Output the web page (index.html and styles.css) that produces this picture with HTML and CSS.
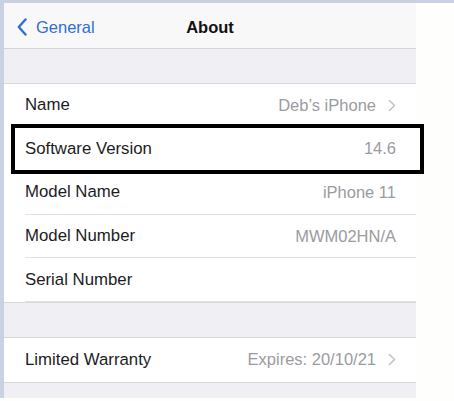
FILE: index.html
```html
<!DOCTYPE html>
<html>
<head>
<meta charset="utf-8">
<link rel="stylesheet" href="styles.css">
</head>
<body>
<div class="frame">
  <div class="screen">
    <div class="navbar">
      <div class="back">
        <svg class="back-icon" width="10" height="18" viewBox="0 0 10 18"><path d="M8.5 1.5 L1.8 9 L8.5 16.5" fill="none" stroke="#2f6fd4" stroke-width="2.4" stroke-linecap="round" stroke-linejoin="round"/></svg>
        <span>General</span>
      </div>
      <div class="title">About</div>
    </div>
    <div class="gap"></div>
    <div class="group">
      <div class="row"><span class="label">Name</span><span class="value">Deb’s iPhone<svg class="chev" width="8" height="13" viewBox="0 0 8 13"><path d="M1.5 1.5 L6.5 6.5 L1.5 11.5" fill="none" stroke="#c4c4c8" stroke-width="1.6" stroke-linecap="round" stroke-linejoin="round"/></svg></span></div>
      <div class="row"><span class="label">Software Version</span><span class="value">14.6</span></div>
      <div class="row"><span class="label">Model Name</span><span class="value">iPhone 11</span></div>
      <div class="row"><span class="label">Model Number</span><span class="value">MWM02HN/A</span></div>
      <div class="row"><span class="label">Serial Number</span><span class="value"></span></div>
      <div class="highlight"></div>
    </div>
    <div class="gap"></div>
    <div class="group">
      <div class="row"><span class="label">Limited Warranty</span><span class="value">Expires: 20/10/21<svg class="chev" width="8" height="13" viewBox="0 0 8 13"><path d="M1.5 1.5 L6.5 6.5 L1.5 11.5" fill="none" stroke="#c4c4c8" stroke-width="1.6" stroke-linecap="round" stroke-linejoin="round"/></svg></span></div>
    </div>
    <div class="gap tail"></div>
  </div>
</div>
</body>
</html>
```
FILE: styles.css
```css
html, body {
  margin: 0;
  padding: 0;
  background: #fefefd;
}
body {
  font-family: "Liberation Sans", Arial, sans-serif;
  width: 454px;
  height: 401px;
  overflow: hidden;
}
.frame {
  border-top: 3px solid #c9d2e3;
  border-left: 4px solid #c9d2e3;
  height: 398px;
  box-sizing: border-box;
  display: flex;
}
.screen {
  width: 412px;
  display: flex;
  flex-direction: column;
  position: relative;
}
.navbar {
  height: 46px;
  padding-top: 3px;
  background: #f8f8f8;
  border-bottom: 1px solid #d4d4d6;
  box-sizing: border-box;
  display: flex;
  align-items: center;
  position: relative;
}
.back {
  display: flex;
  align-items: center;
  padding-left: 13px;
  color: #2f6fd4;
  font-size: 16.5px;
}
.back-icon {
  margin-right: 9px;
}
.title {
  position: absolute;
  left: 0;
  right: 0;
  top: 3px;
  bottom: 0;
  display: flex;
  align-items: center;
  justify-content: center;
  font-weight: bold;
  font-size: 16.5px;
  color: #111;
}
.gap {
  height: 35px;
  background: #efeff4;
  border-bottom: 1px solid #d8d8dc;
  box-sizing: border-box;
}
.gap.tail {
  border-bottom: none;
  flex: 1;
}
.group {
  background: #fff;
  position: relative;
  border-bottom: 1px solid #d8d8dc;
}
.row {
  height: 43.6px;
  margin-left: 21px;
  padding-right: 20px;
  display: flex;
  align-items: center;
  justify-content: space-between;
  border-bottom: 1px solid #e2e2e5;
  box-sizing: border-box;
  font-size: 16.8px;
}
.row:last-of-type {
  border-bottom: none;
}
.label {
  color: #1c1c1e;
}
.value {
  color: #9b9b9f;
  display: flex;
  align-items: center;
  font-size: 16.5px;
}
.chev {
  margin-left: 12px;
}
.highlight {
  position: absolute;
  left: 7px;
  top: 40px;
  width: 413px;
  height: 50px;
  border: 4px solid #000;
  box-sizing: border-box;
}
```
